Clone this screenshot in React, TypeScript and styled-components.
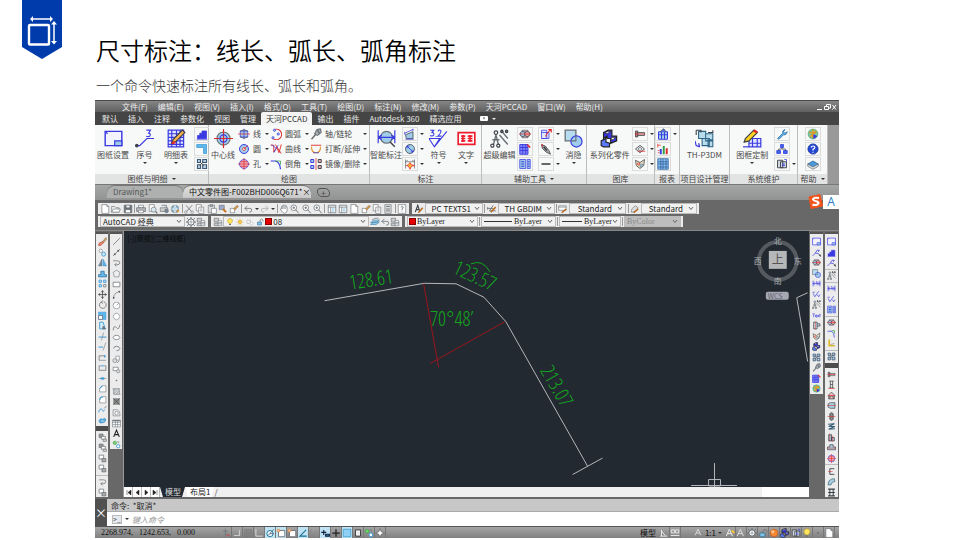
import React from "react";
import styled, { createGlobalStyle, css } from "styled-components";

const UI = `"Noto Sans CJK SC", "Noto Sans", sans-serif`;
const SERIF = `"Liberation Serif", "Noto Sans CJK SC", serif`;

const Global = createGlobalStyle`
  * { box-sizing: border-box; }
  body { margin: 0; background: #fff; font-family: ${UI}; overflow: hidden; }
  button, select, input { font: inherit; color: inherit; margin: 0; padding: 0; border: 0; background: none; border-radius: 0; outline: 0; }
  svg { display: block; flex: none; }
`;

/* ---------- icon drawings: path data, stroke, fill, stroke width ---------- */
type Shape = [string, string, string?, number?];
const c = (x: number, y: number, r: number) =>
  `M${x - r} ${y}a${r} ${r} 0 1 0 ${2 * r} 0a${r} ${r} 0 1 0 ${-2 * r} 0`;
const B = "#3a3ae0";
const K = "#6a7076";
const D = "#3c4147";
const L = "#9fcde8";
const R = "#e02a2a";
const S = "#3d9bd8";
const G = "#2f9e44";
const N = "none";

const icons: Record<string, Shape[]> = {
  sheet: [["M1 2H15V14H1Z", B, "#f4f4ff", 1.2], ["M9 10H15V14H9Z", B, L], ["M1 2L3 4", B]],
  number: [["M1 14H4L10 8H16", B, N, 1], ["M9.500 1H13L11.500 3.500Q13.500 4 12.500 6Q11 7 9.500 6", B], [c(1.5, 14, 1), D, D]],
  bom: [["M1 1H14V15H1ZM1 4H14M1 7H14M1 10H14M1 13H14M4 1V15M8 1V15M11 1V15", B, "#dfe6ff"], ["M4 12L5 9L13 1L15 3L7 11Z", D, "#f6b04a"], ["M4 12L7 11", R, N, 2]],
  blocks: [["M2 14V10H5V7H8V4H14V14Z", B, B], ["M1 15H15", B]],
  corner: [["M1 2H14V14H10V6H1Z", S, "#5db8e8"]],
  gears: [["M2 2H6V6H2ZM9 2H14V6H9ZM2 9H6V14H2ZM9 9H14V14H9Z", "#3d5877", "#bcd3e4", 1.5], ["M6 6L10 10M10 5L5 10", D]],
  center: [[c(8, 8, 5.5), K, L], ["M8 0V16M0 8H16", R], [c(8, 8, 3), B]],
  line: [["M3 4H13V12H3ZM8 1V15", B, L], ["M0 8H16", R], ["M3 4Q8 1 13 4M3 12Q8 15 13 12", D]],
  circle: [[c(8, 8, 6), B, L, 1.3], [c(8, 8, 2), R, "#fff"], ["M8 8L13 3", R]],
  hole: [[c(8, 8, 6), B, "#f0b5c5"], ["M0 8H16M8 0V16M3 5H13M3 11H13", R]],
  arc: [["M3 13A7 7 0 1 0 6 2", R, N, 1.4], [c(4, 13, 1.5), B, L], [c(6, 3, 1.5), B, L], [c(11, 8, 1.5), B, L]],
  curve: [["M1 3H5V12L9 6L12 13L15 2M7 2L15 14", R, N, 1.2], ["M2 2L8 7M5 13L11 3", B]],
  chamfer: [["M1 4H7Q13 5 14 15", B, N, 1.5], ["M7 4H14V9", G]],
  shaft: [["M9 2L14 1L15 6L10 10L6 8Z", D, "#aab2b8"], ["M8 8L2 15M10 3L13 8", K, N, 2]],
  break: [["M1 3H15", R, N, 1.2], ["M2 5Q2 13 8 13Q14 13 14 5", "#e3962c", N, 1.5], ["M4 13H12", B]],
  mirror: [["M1 2H5V6H1ZM1 10H5V14H1Z", B, L, 1.3], ["M11 2H15V6H11ZM11 10H15V14H11Z", D, "#f1b0b0", 1.3], ["M8 0V16", R]],
  smartDim: [[c(8, 7, 5), K, L], ["M1 1V12M15 1V12M1 7H15M1 7L4 5M1 7L4 9M15 7L12 5M15 7L12 9", B], ["M11 11L15 15", D, N, 1.2]],
  dimA: [["M2 9L12 5V14H3Z", D, L], ["M1 7L12 2M1 5V9M12 1V4M2 15H13", B]],
  dimB: [[c(8, 8, 6), D, L], ["M4 4L12 12M4 4V7M4 4H7M12 12V9M12 12H9", B, N, 1.2]],
  dimC: [["M2 2V14M14 2V14M2 5H14M2 5L5 3M14 5L11 3", K], ["M8 6L10 9L14 10L10 11L8 15L6 11L3 10L6 9Z", R, "#f9b934"]],
  symbol: [["M0 8H9L4.500 15L0 8M4.500 15L15 2", B, N, 0.9], ["M1 1H4L2.500 3Q4.500 3 4 5Q3 6.500 1 5.500M6 6V6.800M7.500 2Q8.500 0 10 1.500Q10.500 3 7.500 6H10.500", B, N, 0.9]],
  textBox: [["M1 3H15V13H1Z", "#ee1c2c", "#fff", 1.4], ["M3.500 6H7M3.500 8H7M3.500 10H7M5 5V11M9 6H13M9 8H13M9 10H13M11 5V11", "#ee1c2c", N, 1.3]],
  superEdit: [["M5 5L3 13M5 5L7 13M2 9H8M8 5L15 13M10 2L15 8", K, N, 1.2], [c(5, 3, 1.5), D, "#fff"], [c(2, 14, 1.3), D, "#fff"], [c(7, 14, 1.3), D, "#fff"], [c(10, 2, 1), D, K], [c(14, 2, 1), D, K]],
  roller: [["M4 3H12V13H4Z", K, "#c9a3bc"], [c(5, 8, 3.5), D, L], [c(11, 8, 3.5), D, "#e8a0a0"], ["M0 8H16", R]],
  tableEdit: [["M1 2H12V15H1ZM1 6H12M1 10H12M5 2V15M9 2V15", B, "#7e86f5", 1.2], ["M11 2L15 6", R, N, 2]],
  listBlue: [["M1 2H9V14H1ZM11 2H15V14H11Z", B, L], ["M3 5H7M3 8H7M3 11H7M12 5H14M12 8H14M12 11H14", B, N, 1.4]],
  editRed: [["M2 3H9V14H2ZM2 6H12V14H2", B, "#dfe8ff"], ["M8 9L14 2M9 10L7 11M11 2H15V6", R, N, 1.5]],
  brush: [["M2 2L7 4L12 10L14 15L8 12L3 7Z", D, "#a7a7a7"], ["M5 5L9 10", D, N, 2], ["M2 2L4 4", R, N, 1.5]],
  dash: [["M2 8H14", "#222", N, 1.8]],
  hide: [["M1 1H10V10H1Z", K, "#b7dcf0", 1.1], [c(10.5, 10.5, 4.7), B, "#9fcdf0"], ["M6 10H10V6", K]],
  series: [["M3 3L7 1H10V6H14V10L9 12V8H6V6L3 8Z", "#222", B], ["M1 10L5 8V11L8 12V15H3L1 14Z", "#222", "#5a7bff"], ["M4 3L7 2H9L6 4ZM10 7H13L11 9H9Z", "#222", "#fff", 0.6]],
  bolt: [["M2 4H5V12H2Z", D, "#b77"], ["M5 6H14V10H5Z", D, "#ccc"], ["M1 8H15", R]],
  profile: [["M2 8L8 3L14 8L8 13Z", D, "#ddd"], ["M5 11H15", R], [c(8, 8, 2), K, "#fff"]],
  parts: [["M2 3L8 6L14 2L13 10L8 14L3 10Z", D, "#e8dfc0"], [c(6, 8, 1.5), R], [c(10, 10, 2), K, L]],
  report: [["M2 5H14V15H2ZM2 9H14M6 5V15M10 5V15", B, L, 1.3], ["M4 5L9 1L12 5", D, "#5577e0"]],
  barRGB: [["M5 8V15", B, N, 2.6], ["M9 4V15", G, N, 2.6], ["M13 7V15", R, N, 2.6], ["M1 3H5M1 1V6M1 10H3M1 13H3", R]],
  gridBlue: [["M1 1H15V15H1ZM1 5H15M1 8H15M1 12H15M5 1V15M8 1V15M12 1V15", "#2b5c9c", "#8fc4ee", 1]],
  p3dm: [["M3 2H9V8H3ZM9 4H15V10H9ZM6 8H12V14H6ZM11 9H15V15H11Z", "#2e6586", "#b9dcec", 0.9], ["M1 1H5V3M15 1V3H11M1 1V5", D, N, 0.9], ["M0 10L1 14L4 15M4 15L3 12", B]],
  frame: [["M5 8H15V15H5ZM5 12H15M8 8V15M12 8V15", B, "#e0e4ff"], ["M1 11L2 8L9 1L12 3L5 10Z", D, "#ffd21f"], ["M9 1L12 3", R, N, 2], ["M0 15H5", B]],
  wrench: [["M2 14L9 7Q8 3 12 2L10 5L12 7L15 5Q14 10 10 9L4 15Z", "#2c6fa8", "#5fb0e8"]],
  org: [["M6 2H10V6H6ZM1 10H6V14H1ZM10 10H15V14H10Z", B, "#3a66e8"], ["M8 6V8M3.500 10V8H12.500V10", D]],
  frames: [["M2 3H9V13H2ZM6 5H14V13H6Z", D, "#cfd8e0", 1.2], ["M8 8H12M8 10H12M11 2H14V5", B]],
  globe: [[c(8, 8, 6.5), "#4a7", "#7dc4a0"], ["M3 5Q8 9 13 5M8 2V14M4 12L12 4", "#e29a24", N, 2], ["M9 9L13 11L9 14Z", B, B]],
  help: [[c(8, 8, 6.8), "#15339c", "#2346d0"], ["M5.500 6Q6 4 8 4Q10.500 4 10.500 6Q10.500 7 8 8.500V10M8 11.500V13", "#fff", N, 1.6]],
  book: [["M1 8L8 4L15 8L8 12Z", "#285d92", "#4a9ada"], ["M1 8V11L8 15L15 11V8L8 12Z", K, "#dfe5ea"]],
  page: [["M3 1H11L14 4V15H3ZM11 1V4H14", K, "#fff"]],
  open: [["M1 4H6L8 6H13V13H1Z", K, "#eee"], ["M1 13L4 8H15L13 13Z", K, "#fff"]],
  save: [["M2 2H14V14H2Z", K, "#6b7278", 1.3], ["M5 2H11V6H5ZM4 9H12V14H4Z", K, "#fff"]],
  print: [["M4 2H12V6H4Z", K, "#fff"], ["M1 6H15V12H1Z", K, "#bbb", 1.2], ["M4 10H12V14H4Z", K, "#fff"]],
  preview: [["M2 1H10V12H2Z", K, "#fff"], [c(9, 9, 4), K, "#d7e6ef"], ["M12 12L15 15", K, N, 2]],
  publish: [["M2 6H14V12H2ZM4 2H12V6", K, "#ccc"], [c(12, 11, 3), K, "#789"]],
  web: [[c(8, 8, 6), K, "#8cb5d0"], ["M2 8H14M8 2Q4 8 8 14M8 2Q12 8 8 14", "#fff"], ["M11 10L14 12", "#e08a2a", N, 3]],
  cut: [["M3 2L12 12M13 2L4 12", K, N, 1.3], [c(3, 13, 2), K, "#fff"], [c(13, 13, 2), K, "#fff"]],
  copy: [["M2 1H10V11H2Z", K, "#fff"], ["M6 5H14V15H6ZM8 8H12M8 11H12", K, "#fff"]],
  paste: [["M2 2H12V14H2ZM5 1H9V4H5Z", K, "#ddd"], ["M7 7H15V15H7Z", K, "#fff"]],
  match: [["M2 2H10V9H2Z", K, "#9ac"], ["M8 8L13 13", "#c8741c", N, 3]],
  block: [["M2 7H9V14H2Z", K, "#fff"], ["M7 8L13 2L15 4L9 10", K, "#e79a34"]],
  undo: [["M3 7H11Q14 7 14 10Q14 13 10 13M3 7L7 3M3 7L7 11", K, N, 1.3]],
  redo: [["M13 7H5Q2 7 2 10Q2 13 6 13M13 7L9 3M13 7L9 11", "#aaa", N, 1.3]],
  hand: [["M4 8V4H6V2H8V2H10V3H12V5H13V10Q13 14 9 15Q5 14 2 8ZM6 4V8M8 3V8M10 4V8", K, "#fff"]],
  zoom: [[c(6, 6, 4.5), K, "#fff", 1.2], ["M9 9L14 15M4 6H8M6 4V8", K, N, 1.4]],
  panel: [["M2 2H14V14H2ZM2 5H14M6 5V14", K, "#fff", 1.2], ["M8 8H12M8 11H12", S]],
  calc: [["M3 1H13V15H3Z", K, "#ddd"], ["M5 4H11M5 8H11M5 11H11", K, N, 1.4]],
  helpBox: [["M2 1H14V15H2Z", K, "#fff"], ["M6 5Q8 3 10 5Q10 7 8 8V10M8 12V13", K, N, 1.4]],
  aStyle: [["M2 13L6 2L9 11M3 9H8", D, N, 1.8], ["M7 14L14 6", "#b56a24", N, 2.4]],
  dStyle: [["M1 7H10M1 5V9M10 2L4 11H14", D], ["M6 13L14 5", "#b56a24", N, 2.4]],
  tStyle: [["M1 3H13V10H1ZM1 5H13", K, "#fff"], ["M6 14L13 8", "#b56a24", N, 2.6]],
  mStyle: [["M2 13Q2 6 9 3L13 6Q12 11 5 13Z", K, "#ddd"], ["M6 14L13 8", "#b56a24", N, 2.6]],
  gear: [[c(8, 8, 5), K, "#fff", 1.6], [c(8, 8, 1.8), K], ["M8 0V3M8 13V16M0 8H3M13 8H16M2 2L4 4M12 12L14 14M14 2L12 4M2 14L4 12", K, N, 1.6]],
  layers: [["M2 2H9V8H2ZM2 10H9V14H2Z", K, "#ccc"], ["M8 6H14V14H8ZM8 9H14M8 11H14", K, "#fff"]],
  bulb: [["M8 1Q13 1 13 6Q12 9 10 11H6Q3 8 3 5Q4 1 8 1Z", "#b29428", "#ffe65c"], ["M6 13H10", K, N, 2]],
  sun: [[c(8, 8, 3.5), "#c58b13", "#ffd03c"], ["M8 1V3M8 13V15M1 8H3M13 8H15M3 3L4 4M12 12L13 13M13 3L12 4M3 13L4 12", "#c58b13"]],
  freeze: [["M2 4H9V11H2Z", "#aaa", "#eee"], [c(11, 11, 3), "#aaa", "#fff"]],
  lock: [["M3 8H11V14H3Z", "#2b6788", "#7fc3e6"], ["M8 8V4Q11 0 14 4V7", K, N, 1.4]],
  layerIso: [["M1 9L6 5H15L10 9ZM1 12L6 8H15L10 12Z", "#3a7ca5", "#9fd3ee"], ["M3 5L8 2H14", K]],
  erase: [["M8 8L14 1L16 3L10 10Z", K, "#e5a14f"], ["M2 11L8 8L10 10L5 15H1Z", "#a33", "#e98b6a"]],
  copyObj: [[c(5, 5, 3), K, "#fff"], [c(10, 11, 3.5), S, "#cfe8f7", 1.5]],
  mirrorObj: [["M7 2V14H1Z", K, "#6b8fa8"], ["M9 2V14H15Z", S, "#5db0e4"]],
  offset: [["M1 14V10H5V4H11V10H15V14Z", "#276da1", "#6bb7ea", 1.3]],
  array: [["M2 2H6V6H2ZM10 2H14V6H10ZM2 10H6V14H2Z", S, "#d4ecfa", 1.6], ["M10 10H14V14H10Z", K, "#fff", 1.4]],
  move: [["M8 1V15M1 8H15M8 1L6 4M8 1L10 4M8 15L6 12M8 15L10 12M1 8L4 6M1 8L4 10M15 8L12 6M15 8L12 10", "#444", N, 1.4]],
  rotate: [["M5 4A6 6 0 1 0 10 3M5 4L9 1M5 4L9 6", "#666", N, 1.3]],
  scale: [["M1 2H14V15H1Z", S, "#5cb6ee"], ["M1 8H8V15H1Z", K, "#fff", 1.4]],
  stretch: [["M3 2H9L13 14H3Z", S, "#d4ecfa", 1.6], ["M9 9L14 14H8Z", K, K]],
  trim: [["M1 9H15", S, N, 1.8], ["M10 1L6 15", K]],
  extend: [["M1 9H9", S, N, 1.8], ["M14 1L9 15", K]],
  breakPt: [["M2 13V5H13", K, N, 1.4], ["M12 4V8", S, N, 2.4], ["M2 13H14", K]],
  breakObj: [["M2 5V13H14V5M2 5H5M11 5H14", K, N, 1.3], ["M6 5H10", S, N, 2]],
  join: [["M1 8H6M10 8H15", K], ["M5 8H11", S, N, 4]],
  filletA: [["M3 14V8L8 3H14V14Z", K, "#fff"], ["M3 8L8 3", S, N, 1.8]],
  filletB: [["M3 14V9Q3 3 9 3H14V14Z", K, "#fff"], ["M3 9Q3 3 9 3", S, N, 1.8]],
  blend: [["M1 13Q4 4 7 8Q9 14 12 8", S, N, 1.6], ["M11 6L15 2", K, N, 1.4]],
  explode: [["M2 8Q4 3 8 6Q13 2 14 7Q12 13 7 12Q2 14 2 8Z", "#287db5", "#53ace0"], ["M5 9H11", "#fff"]],
  orderA: [["M2 2H9V8H2Z", K, "#999", 1.3], ["M6 6H13V11H6Z", K, "#fff", 1.3], ["M9 11H15V15H9Z", K, "#ccc"]],
  orderB: [["M2 2H10V9H2Z", K, "#fff", 1.3], ["M7 8H14V14H7Z", K, "#aaa", 1.3]],
  pLine: [["M2 14L14 2", "#444"]],
  xLine: [["M2 14L14 2", "#444"], [c(5, 11, 1), D, D], [c(11, 5, 1), D, D]],
  poly: [["M2 5H10Q14 5 14 9Q14 12 8 12H5M8 9L5 12L8 15", K, N, 1.3]],
  pent: [["M8 2L14 6L12 14H4L2 6Z", K, "#eee"]],
  rect: [["M2 4H14V12H2Z", K, "#fff", 1.3]],
  arc2: [["M3 14Q3 5 13 3", K, N, 1.2], [c(3, 14, 1), D, D], [c(13, 3, 1), D, D]],
  circ: [[c(8, 8, 6), K, "#fff"], ["M8 8L12 4", K]],
  cloud: [["M4 4Q8 0 12 4Q16 8 12 12Q8 16 4 12Q0 8 4 4Z", K, "#fff"]],
  spline: [["M2 13Q3 3 8 8Q12 14 14 3", K, N, 1.3]],
  ellipse: [["M2 8Q3 4 8 4Q13 4 14 8Q13 12 8 12Q3 12 2 8Z", K, "#fff", 1.3]],
  eArc: [["M3 8Q3 4 8 4Q13 4 14 8Q13 12 8 12", K, N, 1.4]],
  insert: [["M7 2H13V9H7Z", K, "#fff"], [c(5, 10, 3.5), K, "#ddd"], ["M9 14L13 10", K, N, 1.3]],
  mkBlock: [["M2 4H11V10H2Z", K, "#fff", 1.2], [c(11, 11, 3), K, "#ddd"]],
  point: [[c(8, 8, 1), K, K]],
  hatch: [["M3 3H13V13H3ZM3 7L7 3M3 12L12 3M7 13L13 7M1 3H3M13 13H15", K, "#ddd"]],
  grad: [["M3 3H13V13H3Z", K, "#888"], ["M2 2L14 14M14 2L2 14", "#444"]],
  region: [["M2 3H9Q14 5 14 10V14H2Z", K, "#eee"], [c(8, 9, 3), K, "#fff"]],
  table: [["M1 2H15V14H1ZM1 6H15M1 10H15M6 2V14M10 2V14", K, "#fff"], ["M1 3H15", K, N, 2]],
  letterA: [["M3 14L8 2L13 14M5 10H11", "#222", N, 2]],
  addSel: [[c(5, 5, 3), G, "#7ccf6f"], [c(11, 11, 3), S, "#fff", 1.6], ["M9 3H12V6", K]],
  leader: [["M1 14L6 9L12 10M6 9L9 4H13L11 7", B, N, 1.3], ["M12 12L15 15V12Z", D, D]],
  textTag: [["M1 5H5M3 5V11M6 9H9Q9 7 7.500 7Q6 7 6 9Q6 11 9 11M10 7L12 11M12 7L10 11M14 5V11M13 7H15", B, N, 1.1]],
  dimH: [["M2 3V13M14 3V13M2 8H14M5 5L2 8L5 11M11 5L14 8L11 11M7 5H9V11", B, N, 1.2]],
  rough: [["M1 4H5M2 6L5 12L12 2M9 8L12 12L14 8", B, N, 1.2]],
  section: [["M3 2H9V14H3ZM9 5H14V9H9", D, "#cfe3ee", 1.3], ["M6 1V15", R]],
  iShape: [["M4 2H12M4 14H12M6 2V14M10 2V14M6 8H10", D, N, 1.3], ["M2 15H14", R]],
  house: [["M3 14V7L8 2L13 7V14ZM5 14V9H11V14", D, "#f0c0c0", 1.3], ["M1 8H15", R]],
  bearing: [["M2 5L6 3H14V13H6L2 11Z", D, "#a9cfe2", 1.2], ["M0 8H16", R]],
  nut: [["M5 3L8 1L11 3V13L8 15L5 13Z", D, "#888", 1.3], ["M1 8H15", R]],
  spring: [["M2 4L13 3L3 8L14 8L3 13L14 12", "#395c75", N, 1.8]],
  motor: [["M3 3H8V14H3ZM8 8H13V14H8Z", D, "#a9cfe2", 1.3], ["M5 1V15M10 5V15", R]],
  valve: [["M5 3H11V7H15V12H1V7H5Z", D, "#a9cfe2", 1.2], ["M0 9H16", R]],
  cShape: [["M13 3H5V13H13", D, N, 1.6], ["M2 8H10", R]],
  pipe: [["M2 14Q2 3 13 3L14 8Q8 8 7 14Z", "#395c75", "#a9cfe2", 1.2]],
  beam: [["M2 2H14M2 14H14M5 2V14M11 2V14M2 8H14", D, "#a9cfe2", 1.8]],
  yel: [["M4 1V12H14", "#e0b82a", N, 3], ["M6 10L13 8", K]],
  cornerG: [["M1 4H8Q13 6 13 15", B, N, 1.3], ["M8 3H13V8", G, N, 1.3]],
  snap: [["M7 1V13M3 5H11", K, N, 1.2], ["M9 10L14 13", R, N, 1.4]],
  infer: [["M12 3V12H3", "#ccc", N, 1.8]],
  gridDots: [["M2 2H14V14H2ZM2 5H14M2 8H14M2 11H14M5 2V14M8 2V14M11 2V14", "#777"]],
  ortho: [["M3 2V13H14", "#ddd", N, 1.5]],
  polar: [[c(8, 9, 5), "#1b6e93", "#e6f8ff", 1.4], ["M5 12L14 2M8 9H14", D]],
  osnap: [["M4 4H14V14H4Z", K, "#fff", 1.4], ["M2 2H6V6H2Z", "#d84", "#f9c29a"]],
  angle: [["M13 3L3 13H14", "#1b6e93", N, 1.7]],
  ucs: [["M3 2V13H14M4 12L13 4", "#888", N, 1.3]],
  dyn: [["M2 7H10M6 3V11M9 10H15V13H9Z", "#124", "#39b", 1.8]],
  plus: [["M8 2V14M2 8H14", "#222", N, 2]],
  trans: [["M2 2H14V14H2Z", "#39c", "#8fd0f5", 1.2]],
  square: [["M4 3H12V13H4Z", "#333", "#eee", 1.4]],
  star4: [["M8 1L10 6L15 8L10 10L8 15L6 10L1 8L6 6Z", "#555", "#fff"]],
  ball: [[c(8, 8, 6), "#c9520c", "#f58a34"], [c(6, 6, 2), "#fbc593", "#fbc593"]],
  annot: [["M2 13L7 2L12 13M4 9H10", "#eee", N, 1.6], ["M11 4L15 8", "#f9c22e", N, 3]],
  annotGray: [["M2 13L7 2L12 13M4 9H10", "#ddd", N, 1.6]],
  layout1: [["M2 13H13M4 3V13M4 5L10 12", "#eee", N, 1.5]],
  layout2: [["M2 3H7V8H2ZM9 3H14V8H9ZM1 12H15", "#eee", N, 1.4]],
};

const Icon = ({ n, s = 12 }: { n: string; s?: number }) => (
  <svg width={s} height={s} viewBox="0 0 16 16" aria-hidden="true">
    {(icons[n] || []).map(([d, stroke, fill, w], i) => (
      <path key={i} d={d} stroke={stroke} fill={fill || "none"} strokeWidth={w || 1} />
    ))}
  </svg>
);

/* ---------- slide header ---------- */
const Page = styled.div`display: flex; flex-direction: column; min-height: 100vh; position: relative;`;
const Badge = styled.svg`position: absolute; left: 22px; top: 0;`;
const Header = styled.header`padding: 34px 24px 4px 96px;`;
const Title = styled.h1`margin: 0; font-size: 24px; line-height: 32px; font-weight: 350; color: #000;`;
const Sub = styled.p`margin: 9px 0 0; font-size: 14px; line-height: 21px; font-weight: 300; color: #333;`;

/* ---------- application frame ---------- */
const Win = styled.main`
  flex: 1; display: flex; flex-direction: column; position: relative;
  margin: 0 121px 2px 95px; background: #686868; font-size: 8px; line-height: 10px; color: #4a4a4a;
`;
const Caret = styled.span`
  width: 0; height: 0; flex: none; border: 2px solid transparent; border-top-color: #333; border-bottom: 0;
`;
const MenuBar = styled.nav`
  display: flex; gap: 10px; align-items: center; height: 12px; padding: 0 2px 0 27px;
  background: linear-gradient(#858585, #606060); color: #eee; white-space: nowrap; border-top: 1px solid #4a4a4a;
`;
const WinButtons = styled.div`margin-left: auto; display: flex; gap: 2px; color: #fff;`;
const RibbonTabs = styled.nav`
  display: flex; align-items: center; height: 13px; background: #454545; color: #e8e8e8; padding-left: 2px;
  white-space: nowrap;
`;
const RibbonTab = styled.button<{ $on?: boolean }>`
  height: 13px; padding: 0 5px; line-height: 12px;
  ${(p) => p.$on && css`background: #f4f4f4; color: #333; border-radius: 2px 2px 0 0;`}
`;
const MediaTab = styled.button`display: flex; align-items: center; gap: 4px; margin-left: 14px;`;
const LightCaret = styled(Caret)`border-top-color: #eee;`;

const cols = (a: number[]) => a.map((n) => `minmax(0, ${n}fr)`).join(" ");
const Ribbon = styled.section`
  display: grid; grid-template-columns: ${cols([114, 161, 112, 105, 68, 25, 50, 68, 30])} 11px;
  height: 60px; background: #999; border-bottom: 1px solid #777;
`;
const Panel = styled.div`
  display: flex; flex-direction: column; background: #f7f8f8; border-right: 1px solid #bcbcbc; white-space: nowrap;
`;
const PanelBody = styled.div<{ $cols: number[] }>`
  flex: 1; display: grid; grid-template-columns: ${(p) => cols(p.$cols)};
`;
const PanelTitle = styled.div`
  height: 10px; display: flex; gap: 4px; justify-content: center; align-items: center; background: #e2e3e3; color: #444;
`;
const Big = styled.button`
  display: flex; flex-direction: column; align-items: center; justify-content: flex-start; padding-top: 4px; gap: 2px;
`;
const BigLabel = styled.span`height: 10px; line-height: 10px;`;
const Stack = styled.div`display: grid; grid-template-rows: repeat(3, 1fr); padding: 1px 0 2px;`;
const StackRow = styled.div<{ $center?: boolean }>`
  display: flex; align-items: center; justify-content: ${(p) => (p.$center ? "center" : "flex-start")}; gap: 1px;
`;
const Small = styled.button<{ $frame?: boolean }>`
  display: flex; align-items: center; gap: 2px; height: 14px; padding: 0 1px;
  ${(p) => p.$frame && css`border: 1px solid #dcdcdc;`}
`;
const SmallLabel = styled.span`margin-left: 1px;`;
const Fill = styled.span`flex: 1;`;

const DocTabs = styled.div`
  display: flex; align-items: flex-end; height: 17px; padding: 0 0 2px 12px;
  background: linear-gradient(#a4a7a6, #929292); border-bottom: 2px solid #686868;
`;
const DocTab = styled.button<{ $on?: boolean }>`
  display: flex; align-items: center; justify-content: space-between; height: 13px; width: ${(p) => (p.$on ? 128 : 76)}px;
  padding: 0 6px; color: ${(p) => (p.$on ? "#111" : "#555")}; white-space: nowrap;
  background: ${(p) => (p.$on ? "linear-gradient(#e2e2e2, #c8c8c8)" : "#adb0af")};
  border-radius: 8px 8px 0 0; border-top: 1px solid #777;
`;
const NewTab = styled.button`margin: 0 0 1px 6px; width: 13px; height: 9px; border: 1px solid #555; border-radius: 3px 5px 3px 5px; line-height: 7px;`;

const Tools = styled.div`padding-bottom: 2px; border-bottom: 1px solid #888;`;
const ToolRow = styled.div`display: flex; height: 13px; padding: 1px 0 1px 3px;`;
const Strip = styled.div<{ $w: number }>`
  display: flex; align-items: center; justify-content: space-between; width: ${(p) => p.$w}px; min-width: 0;
  margin-right: 3px; padding: 0 2px; background: #ececec; flex: 0 1 auto;
`;
const IconBtn = styled.button`display: flex; align-items: center; justify-content: center;`;
const Rule = styled.i`width: 1px; height: 9px; background: #999;`;
const Field = styled.label<{ $w: number; $off?: boolean; $serif?: boolean }>`
  display: grid; grid-template-columns: minmax(0, 1fr) 8px; align-items: center; width: ${(p) => p.$w}px; height: 11px;
  background: ${(p) => (p.$off ? "#bdbdbd" : "#f1f1f1")}; color: ${(p) => (p.$off ? "#888" : "#222")};
  font-family: ${(p) => (p.$serif ? SERIF : UI)}; border: 1px solid #bbb;
`;
const FieldBody = styled.span`display: flex; align-items: center; gap: 2px; min-width: 0; padding-left: 2px;`;
const Select = styled.select<{ $center?: boolean }>`
  appearance: none; flex: 1; min-width: 28px; height: 9px; line-height: 9px; text-align: ${(p) => (p.$center ? "center" : "left")};
  text-align-last: ${(p) => (p.$center ? "center" : "left")}; opacity: 1;
`;
const Swatch = styled.i`flex: none; width: 5px; height: 5px; background: #e60000; outline: 1px solid #800;`;
const LineSample = styled.i`flex: 0 1 28px; height: 1px; background: #333;`;

const Work = styled.section`flex: 1; display: flex; min-height: 0;`;
const Dock = styled.div<{ $w: number }>`display: flex; gap: 2px; width: ${(p) => p.$w}px; padding: 1px 1px 0; flex: none;`;
const Palette = styled.div<{ $h: number }>`
  flex: 1; display: flex; flex-direction: column; align-items: center; justify-content: space-between;
  height: ${(p) => p.$h}%; padding: 3px 0 0; background: #ececec; border-top: 2px solid #555;
`;
const Divider = styled.i<{ $dark?: boolean }>`
  width: 100%; height: ${(p) => (p.$dark ? 5 : 1)}px; background: ${(p) => (p.$dark ? "#4c4c4c" : "#bbb")};
`;
const Center = styled.div`flex: 1; display: flex; flex-direction: column; min-width: 0; border-left: 1px solid #999;`;
const Canvas = styled.div`flex: 1; min-height: 0; position: relative; background: #222931;`;
const Drawing = styled.svg`position: absolute; inset: 0; width: 100%; height: 100%;`;
const SheetBar = styled.div`display: flex; height: 10px; background: #f0f0f0; line-height: 10px; border-right: 47px solid #fff;`;
const NavBtn = styled.button`
  width: 9px; height: 10px; display: grid; place-items: center; background: #fff; border-right: 1px solid #bbb;
`;
const Sheet = styled.button<{ $on?: boolean }>`
  padding: 0 4px 0 5px; height: 10px; line-height: 10px; color: ${(p) => (p.$on ? "#ddd" : "#222")};
  background: ${(p) => (p.$on ? "#222931" : "#fff")}; clip-path: polygon(0 0, 100% 0, calc(100% - 3px) 100%, 3px 100%);
`;

const Command = styled.section`display: grid; grid-template-columns: 12px minmax(0, 1fr); margin-top: 2px; height: 27px;`;
const Grip = styled.button`background: #505050; color: #fff; font-size: 12px;`;
const History = styled.div`height: 13px; line-height: 13px; background: #c7c7c7; padding-left: 4px; border-bottom: 1px solid #aaa; color: #222;`;
const Prompt = styled.label`display: flex; align-items: center; gap: 3px; height: 14px; background: #fff; padding-left: 5px;`;
const PromptMark = styled.span`width: 10px; height: 9px; line-height: 7px; border: 1px solid #bbb; background: #e6eaf0; font-size: 7px;`;
const Input = styled.input`
  flex: 1; min-width: 0; height: 12px; font-style: italic;
  &::placeholder { color: #999; opacity: 1; }
`;
const Status = styled.footer`
  display: flex; align-items: center; height: 12px; background: linear-gradient(#a5a5a5, #808080); color: #222;
  border-top: 1px solid #555; padding-right: 4px;
`;
const Coords = styled.span`width: 126px; padding-left: 6px; font: 8px/11px ${SERIF}; white-space: pre; color: #111;`;
const Toggle = styled.button<{ $on?: boolean }>`
  width: 11px; height: 11px; display: grid; place-items: center; border-right: 1px solid #777;
  background: ${(p) => (p.$on ? "#bfe3f2" : "transparent")};
`;
const StatusText = styled.button`display: flex; align-items: center; gap: 2px; padding: 0 3px; color: #111;`;
const Spacer = styled.span`width: 10px;`;
const Ime = styled.div`
  position: absolute; right: 0; top: 94px; display: flex; align-items: center; color: #2b7bc4; font: 12px/14px "Open Sans", sans-serif;
`;
const ImeMode = styled.span`background: #fff; width: 16px; height: 14px; text-align: center;`;

const menus = ["文件(F)", "编辑(E)", "视图(V)", "插入(I)", "格式(O)", "工具(T)", "绘图(D)", "标注(N)", "修改(M)", "参数(P)", "天河PCCAD", "窗口(W)", "帮助(H)"];
const ribbonTabs = ["默认", "插入", "注释", "参数化", "视图", "管理", "天河PCCAD", "输出", "插件", "Autodesk 360", "精选应用"];

const BigTool = ({ icon, label, caret }: { icon: string; label: string; caret?: boolean }) => (
  <Big><Icon n={icon} s={19} /><BigLabel>{label}</BigLabel>{caret && <Caret />}</Big>
);

/* One entry per row; "+" after a name adds a drop-down caret, "|" places two tools on a row. */
const Tri = ({ rows, center }: { rows: string[]; center?: boolean }) => (
  <Stack>
    {rows.map((r) => (
      <StackRow key={r} $center={center}>
        {r.split("|").map((cell, i) => (
          <React.Fragment key={cell}>
            {i > 0 && <Fill />}
            <Small $frame aria-label={cell}><Icon n={cell.replace("+", "")} /></Small>
            {cell.endsWith("+") && <Small aria-label={`${cell} 菜单`}><Caret /></Small>}
          </React.Fragment>
        ))}
      </StackRow>
    ))}
  </Stack>
);

const Labeled = ({ items }: { items: [string, string][] }) => (
  <Stack>
    {items.map(([icon, label]) => (
      <StackRow key={label}>
        <Small><Icon n={icon} /><SmallLabel>{label}</SmallLabel></Small><Fill /><Caret />
      </StackRow>
    ))}
  </Stack>
);

const Group = ({ title, widths, more, children }: { title: string; widths: number[]; more?: boolean; children: React.ReactNode }) => (
  <Panel>
    <PanelBody $cols={widths}>{children}</PanelBody>
    <PanelTitle>{title}{more && <Caret />}</PanelTitle>
  </Panel>
);

const Pick = ({ w, value, label, center, off, serif, before }: {
  w: number; value: string; label: string; center?: boolean; off?: boolean; serif?: boolean; before?: React.ReactNode;
}) => (
  <Field $w={w} $off={off} $serif={serif}>
    <FieldBody>
      {before}
      <Select aria-label={label} $center={center} disabled={off}><option>{value}</option></Select>
    </FieldBody>
    <svg width="6" height="5" viewBox="0 0 6 5"><path d="M1 1L3 3.500L5 1" fill="none" stroke="#666" /></svg>
  </Field>
);

const IconSeq = ({ names, s = 10 }: { names: string; s?: number }) => (
  <>
    {names.split(" ").map((n, i) =>
      n === "|" ? <Rule key={i} /> : n === "v" ? <Caret key={i} /> : <IconBtn key={i} aria-label={n}><Icon n={n} s={s} /></IconBtn>
    )}
  </>
);

const Tray = ({ names, h }: { names: string; h: number }) => (
  <Palette $h={h}>
    {names.split(" ").map((n, i) =>
      n === "|" ? <Divider key={i} /> : n === "=" ? <Divider key={i} $dark /> : <IconBtn key={i} aria-label={n}><Icon n={n} s={9} /></IconBtn>
    )}
  </Palette>
);

const CadDrawing = () => (
  <Drawing viewBox="124 230 685 257" preserveAspectRatio="xMidYMid meet">
    <g fill="none" stroke="#b4b7bb">
      <path d="M324 300L424 282.500L456 283L484 296.500L506 321L588 466M573 474.500L603 458" />
      <path d="M809 292L798 297L809 361" />
      <path d="M715.500 463V487M692 485.500H738M709.500 479.500H721.500V486H709.500Z" />
    </g>
    <path d="M423.500 283L438.500 367M430 363L505 321" fill="none" stroke="#9c151b" />
    <g
      fill="#12a81c"
      fontFamily='"Open Sans Condensed Light", "Open Sans Condensed", Roboto, sans-serif'
      fontSize="20"
      fontWeight="300"
    >
      <text transform="translate(350 289) rotate(-9)">128.61</text>
      <text transform="translate(452 272) rotate(25)">123.57</text>
      <text x="430" y="325">70°48’</text>
      <text transform="translate(540 370) rotate(60)">213.07</text>
    </g>
    <path d="M471 263Q483 258 490 271" fill="none" stroke="#12a81c" />
    <circle cx="779" cy="260" r="19" fill="none" stroke="#555a60" strokeWidth="4" />
    <path d="M770 250H788V268H770Z" fill="#b5b7b8" />
    <g fontFamily={UI} fontSize="8" fill="#a9acb0" textAnchor="middle">
      <text x="779" y="243">北</text>
      <text x="759" y="263">西</text>
      <text x="799" y="263">东</text>
      <text x="779" y="283">南</text>
      <text x="779" y="263" fontSize="12" fill="#555">上</text>
    </g>
    <rect x="767" y="291" width="23" height="8" rx="2" fill="#a6a8b4" />
    <text x="769" y="298" fontFamily={UI} fontSize="7" fill="#62656e">WCS</text>
    <text x="126" y="240" fontFamily={UI} fontSize="7" fill="#07090b">[-][俯视][二维线框]</text>
  </Drawing>
);

export default function App() {
  return (
    <Page>
      <Global />
      <Badge width="40" height="60" viewBox="0 0 40 60" aria-hidden="true">
        <path d="M0 0H40V47L20 59L0 47Z" fill="#003bab" />
        <g fill="none" stroke="#fff" strokeWidth="2" strokeLinejoin="round" strokeLinecap="round">
          <rect x="7" y="25" width="20" height="19.500" rx="1" strokeWidth="2.400" />
          <path d="M10 19H29M32 23V42" strokeWidth="1.500" />
        </g>
        <path d="M8 19L11 16V22ZM31 19L28 16V22ZM32 21L29 24.500H35ZM32 44.500L29 41H35Z" fill="#fff" />
      </Badge>
      <Header>
        <Title>尺寸标注：线长、弧长、弧角标注</Title>
        <Sub>一个命令快速标注所有线长、弧长和弧角。</Sub>
      </Header>
      <Win>
        <MenuBar>
          {menus.map((m) => <button key={m}>{m}</button>)}
          <WinButtons>
            <svg width="20" height="8" viewBox="0 0 20 8" fill="none" stroke="#fff">
              <path d="M0 6.500H5M7.500 3.500H11.500V6.500H7.500ZM9.500 3V1.500H13.500V5H12M15.500 2L19 6.500M19 2L15.500 6.500" />
            </svg>
          </WinButtons>
        </MenuBar>
        <RibbonTabs>
          {ribbonTabs.map((t, i) => <RibbonTab key={t} $on={i === 6}>{t}</RibbonTab>)}
          <MediaTab aria-label="显示">
            <svg width="8" height="5" viewBox="0 0 8 5"><rect width="8" height="5" rx="1" fill="#fff" /><path d="M3 1.500H5L4 3.500Z" fill="#444" /></svg>
            <LightCaret />
          </MediaTab>
        </RibbonTabs>
        <Ribbon>
          <Group title="图纸与明细" more widths={[36, 27, 36, 14]}>
            <BigTool icon="sheet" label="图纸设置" />
            <BigTool icon="number" label="序号" caret />
            <BigTool icon="bom" label="明细表" caret />
            <Tri rows={["blocks", "corner", "gears"]} />
          </Group>
          <Group title="绘图" widths={[28, 32, 40, 52, 8]}>
            <BigTool icon="center" label="中心线" />
            <Labeled items={[["line", "线"], ["circle", "圆"], ["hole", "孔"]]} />
            <Labeled items={[["arc", "圆弧"], ["curve", "曲线"], ["chamfer", "倒角"]]} />
            <Labeled items={[["shaft", "轴/链轮"], ["break", "打断/延伸"], ["mirror", "镜像/删除"]]} />
          </Group>
          <Group title="标注" widths={[32, 24, 25, 30]}>
            <BigTool icon="smartDim" label="智能标注" />
            <Tri rows={["dimA+", "dimB+", "dimC+"]} />
            <BigTool icon="symbol" label="符号" caret />
            <BigTool icon="textBox" label="文字" caret />
          </Group>
          <Group title="辅助工具" more widths={[35, 44, 25]}>
            <BigTool icon="superEdit" label="超级编辑" />
            <Tri rows={["roller|editRed+", "tableEdit|brush+", "listBlue|dash+"]} />
            <BigTool icon="hide" label="消隐" caret />
          </Group>
          <Group title="图库" widths={[46, 22]}>
            <BigTool icon="series" label="系列化零件" />
            <Tri rows={["bolt+", "profile+", "parts+"]} />
          </Group>
          <Group title="报表" widths={[25]}>
            <Tri rows={["report+", "barRGB", "gridBlue"]} />
          </Group>
          <Group title="项目设计管理" widths={[50]}>
            <BigTool icon="p3dm" label="TH-P3DM" />
          </Group>
          <Group title="系统维护" widths={[45, 23]}>
            <BigTool icon="frame" label="图框定制" caret />
            <Tri rows={["wrench", "org", "frames+"]} />
          </Group>
          <Group title="帮助" more widths={[30]}>
            <Tri center rows={["globe", "help", "book"]} />
          </Group>
        </Ribbon>
        <DocTabs>
          <DocTab>Drawing1*</DocTab>
          <DocTab $on><span>中文零件图-F002BHD006Q671*</span><span>×</span></DocTab>
          <NewTab aria-label="新建">+</NewTab>
        </DocTabs>
        <Tools>
          <ToolRow>
            <Strip $w={311}>
              <IconSeq names="page open save | print preview publish web | cut copy paste match block | undo v redo v | hand zoom zoom zoom | panel panel page block copy calc | helpBox" />
            </Strip>
            <Strip $w={287}>
              <IconSeq names="aStyle" /><Pick w={58} value="PC TEXTS1" label="文字样式" center /><Rule />
              <IconSeq names="dStyle" /><Pick w={57} value="TH GBDIM" label="标注样式" center /><Rule />
              <IconSeq names="tStyle" /><Pick w={57} value="Standard" label="表格样式" center /><Rule />
              <IconSeq names="mStyle" /><Pick w={56} value="Standard" label="多重引线样式" center />
            </Strip>
          </ToolRow>
          <ToolRow>
            <Strip $w={110}>
              <Pick w={85} value="AutoCAD 经典" label="工作空间" /><IconSeq names="gear layers" />
            </Strip>
            <Strip $w={191}>
              <IconSeq names="layers" />
              <Pick w={146} value="08" label="图层" before={<><Icon n="bulb" s={8} /><Icon n="sun" s={8} /><Icon n="freeze" s={8} /><Icon n="lock" s={8} /><Swatch /></>} />
              <IconSeq names="layerIso undo layers" />
            </Strip>
            <Strip $w={278}>
              <Pick serif w={71} value="ByLayer" label="颜色" before={<Swatch />} /><Rule />
              <Pick serif w={75} value="ByLayer" label="线型" before={<LineSample />} /><Rule />
              <Pick serif w={62} value="ByLayer" label="线宽" before={<LineSample />} /><Rule />
              <Pick serif off w={57} value="ByColor" label="打印样式" />
            </Strip>
          </ToolRow>
        </Tools>
        <Work>
          <Dock $w={28}>
            <Tray h={100} names="erase copyObj mirrorObj offset array move rotate scale stretch trim extend breakPt breakObj join filletA filletB blend explode = orderA orderA orderB orderB | poly orderB" />
            <Tray h={82} names="pLine xLine poly pent rect arc2 circ cloud spline ellipse eArc insert mkBlock point hatch grad region table letterA addSel" />
          </Dock>
          <Center>
            <Canvas><CadDrawing /></Canvas>
            <SheetBar>
              {["M2 1V6M6 1L3 3.500L6 6Z", "M5 1L2 3.500L5 6Z", "M2 1L5 3.500L2 6Z", "M5 1V6M1 1L4 3.500L1 6Z"].map((d) => (
                <NavBtn key={d} aria-label="布局导航"><svg width="7" height="7" viewBox="0 0 7 7"><path d={d} fill="#222" stroke="#222" strokeWidth="0.500" /></svg></NavBtn>
              ))}
              <Sheet $on>模型</Sheet><Sheet>布局1</Sheet><span>/</span>
            </SheetBar>
          </Center>
          <Dock $w={30}>
            <Tray h={61} names="sheet leader roller hide dimH rough superEdit textTag section parts series gears shaft tableEdit globe" />
            <Tray h={100} names="sheet blocks leader | superEdit | dimH rough listBlue | roller cornerG yel | gears = bolt iShape house bearing nut spring motor valve hole | cShape pipe beam" />
          </Dock>
        </Work>
        <Command>
          <Grip aria-label="关闭">×</Grip>
          <div>
            <History>命令:&nbsp; *取消*</History>
            <Prompt><PromptMark>&gt;_</PromptMark><Caret /><Input placeholder="键入命令" aria-label="命令行" /></Prompt>
          </div>
        </Command>
        <Status>
          <Coords>2268.974,   1242.653,   0.000</Coords>
          {["snap", "infer", "gridDots", "ortho", "polar*", "osnap*", "osnap", "angle*", "ucs", "dyn*", "plus", "trans*", "square", "addSel", "star4"].map((n, i) => (
            <Toggle key={i} $on={n.endsWith("*")} aria-label={n}><Icon n={n.replace("*", "")} s={10} /></Toggle>
          ))}
          <Fill />
          <StatusText>模型</StatusText>
          <Toggle aria-label="布局"><Icon n="layout1" s={10} /></Toggle>
          <Toggle aria-label="视口"><Icon n="layout2" s={10} /></Toggle>
          <Spacer />
          <StatusText><Icon n="annotGray" s={9} />1:1<Caret /></StatusText>
          {["annot", "annotGray", "gear", "lock", "ball", "series", "frames", "bulb", "point", "page"].map((n) => (
            <Toggle key={n} aria-label={n}><Icon n={n} s={10} /></Toggle>
          ))}
        </Status>
        <Ime>
          <svg width="15" height="15" viewBox="0 0 15 15"><path d="M1 3L12 0.500L14.500 12L3 14.500Z" fill="#f2541b" stroke="#f2541b" strokeLinejoin="round" /><path d="M11 4Q5 3 5 5.500Q6 7 9 7.500Q12 9 9.500 10.500Q7 11.500 4.500 10.500" fill="none" stroke="#fff" strokeWidth="2" /></svg>
          <ImeMode>A</ImeMode>
        </Ime>
      </Win>
    </Page>
  );
}
